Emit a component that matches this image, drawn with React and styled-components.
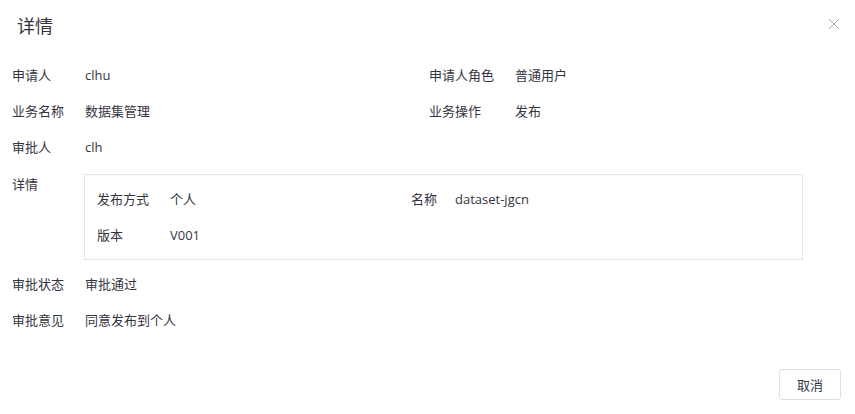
import React from "react";
import styled, { createGlobalStyle } from "styled-components";

const Global = createGlobalStyle`
  html, body { margin: 0; padding: 0; background: #fff; }
  body {
    font-family: "Open Sans", "Noto Sans CJK SC", sans-serif;
    color: #35353f;
    font-size: 13px;
  }
`;

const Dialog = styled.div`
  width: 855px;
  height: 414px;
  display: flex;
  flex-direction: column;
  background: #fff;
`;

const Header = styled.div`
  display: flex;
  align-items: center;
  justify-content: space-between;
  padding: 14px 15px 19px 17px;
  height: 24px;
`;

const Title = styled.h2`
  margin: 0;
  font-size: 18px;
  font-weight: 400;
  line-height: 24px;
  color: #35353f;
`;

const Close = styled.button`
  border: 0;
  background: transparent;
  padding: 0;
  width: 12px;
  height: 12px;
  display: flex;
  margin-top: -4px;
  cursor: pointer;
`;

const Body = styled.div`
  padding: 0 12px;
  flex: 1;
`;

const Row = styled.div`
  display: grid;
  grid-template-columns: ${(p) => p.$cols};
  padding: ${(p) => p.$pad || "8px 0"};
  line-height: 20px;
  align-items: start;
`;

const Label = styled.div`
  color: #35353f;
  white-space: nowrap;
`;

const Value = styled.div`
  color: #35353f;
  white-space: nowrap;
`;

const Box = styled.div`
  border: 1px solid #e4e4ef;
  padding: 6px 12px 6px 12px;
  width: 693px;
`;

const Footer = styled.div`
  display: flex;
  justify-content: flex-end;
  padding: 0 14px 14px 0;
`;

const Button = styled.button`
  width: 62px;
  height: 31px;
  border: 1px solid #dcdfe6;
  border-radius: 3px;
  background: #fff;
  color: #35353f;
  font-family: inherit;
  font-size: 13px;
  padding: 0;
`;

const OUTER = "73px 344px 86px 1fr";
const INNER = "73px 241px 44px 1fr";

export default function App() {
  return (
    <Dialog>
      <Global />
      <Header>
        <Title>详情</Title>
        <Close aria-label="close">
          <svg width="12" height="12" viewBox="0 0 12 12">
            <path d="M1 1L11 11M11 1L1 11" stroke="#a0a3a8" strokeWidth="1" fill="none" />
          </svg>
        </Close>
      </Header>
      <Body>
        <Row $cols={OUTER}>
          <Label>申请人</Label>
          <Value>clhu</Value>
          <Label>申请人角色</Label>
          <Value>普通用户</Value>
        </Row>
        <Row $cols={OUTER}>
          <Label>业务名称</Label>
          <Value>数据集管理</Value>
          <Label>业务操作</Label>
          <Value>发布</Value>
        </Row>
        <Row $cols={OUTER}>
          <Label>审批人</Label>
          <Value>clh</Value>
        </Row>
        <Row $cols="72px 1fr" $pad="9px 0 6px">
          <Label>详情</Label>
          <Box>
            <Row $cols={INNER}>
              <Label>发布方式</Label>
              <Value>个人</Value>
              <Label>名称</Label>
              <Value>dataset-jgcn</Value>
            </Row>
            <Row $cols={INNER}>
              <Label>版本</Label>
              <Value>V001</Value>
            </Row>
          </Box>
        </Row>
        <Row $cols={OUTER}>
          <Label>审批状态</Label>
          <Value>审批通过</Value>
        </Row>
        <Row $cols={OUTER}>
          <Label>审批意见</Label>
          <Value>同意发布到个人</Value>
        </Row>
      </Body>
      <Footer>
        <Button>取消</Button>
      </Footer>
    </Dialog>
  );
}
